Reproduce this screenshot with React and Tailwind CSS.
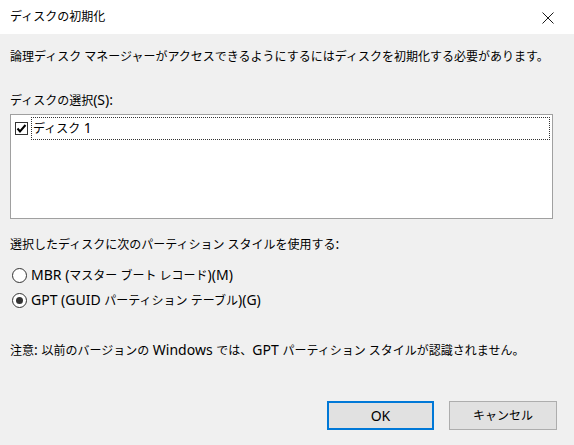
function L({ children }) {
  return <span className="text-[14px]">{children}</span>;
}

export default function App() {
  const font = { fontFamily: '"Noto Sans", "Noto Sans CJK JP", sans-serif' };
  return (
    <div
      className="w-[574px] h-[445px] bg-[#f0f0f0] text-[12px] text-black flex flex-col overflow-hidden"
      style={font}
    >
      <div className="h-[34px] bg-white flex items-center justify-between pl-[10px] pr-[20px] shrink-0">
        <span className="leading-[20px]">ディスクの初期化</span>
        <svg width="12" height="12" viewBox="0 0 12 12" className="mt-[2px]">
          <path d="M0.5 0.5 L11.5 11.5 M11.5 0.5 L0.5 11.5" stroke="#1a1a1a" strokeWidth="1" fill="none" />
        </svg>
      </div>
      <div className="flex flex-col pl-[10px] pr-[21px]">
        <div className="mt-[13px] h-[20px] leading-[20px] whitespace-nowrap">
          論理ディスク マネージャーがアクセスできるようにするにはディスクを初期化する必要があります。
        </div>
        <div className="mt-[23px] h-[20px] leading-[20px]">ディスクの選択<L>(S):</L></div>
        <div className="mt-[4px] h-[105px] bg-white border border-[#a0a0a0] p-[2px]">
          <div className="flex items-center h-[23px]">
            <div className="w-[13px] h-[13px] border border-[#333333] bg-white ml-[2px] mr-[3px] flex items-center justify-center shrink-0">
              <svg width="11" height="11" viewBox="0 0 11 11">
                <path d="M1.5 5.5 L4 8.5 L9.5 2" stroke="#000" strokeWidth="2" fill="none" />
              </svg>
            </div>
            <div className="flex-1 h-[23px] border border-dotted border-[#333333] flex items-center pl-[1px] leading-[20px]">
              <span>ディスク<L> 1</L></span>
            </div>
          </div>
        </div>
        <div className="mt-[15px] h-[20px] leading-[20px] whitespace-nowrap">
          選択したディスクに次のパーティション スタイルを使用する<L>:</L>
        </div>
        <div className="mt-[11px] h-[20px] flex items-center pl-[2px]">
          <div className="w-[15px] h-[15px] rounded-full border border-[#333333] bg-white mr-[4px] shrink-0" />
          <span className="leading-[20px] whitespace-nowrap"><L>MBR (</L>マスター ブート レコード<L>)(M)</L></span>
        </div>
        <div className="mt-[5px] h-[20px] flex items-center pl-[2px]">
          <div className="w-[15px] h-[15px] rounded-full border border-[#333333] bg-white mr-[4px] shrink-0 flex items-center justify-center">
            <div className="w-[7px] h-[7px] rounded-full bg-[#333333]" />
          </div>
          <span className="leading-[20px] whitespace-nowrap"><L>GPT (GUID </L>パーティション テーブル<L>)(G)</L></span>
        </div>
        <div className="mt-[30px] h-[20px] leading-[20px] whitespace-nowrap">
          注意<L>: </L>以前のバージョンの<L> Windows </L>では、<L>GPT </L>パーティション スタイルが認識されません。
        </div>
        <div className="mt-[41px] flex justify-end gap-[15px] pr-0 mr-[-4px]">
          <button className="w-[107px] h-[29px] bg-[#e1e1e1] border-2 border-[#0078d7] flex items-center justify-center leading-[20px]">
            <L>OK</L>
          </button>
          <button className="w-[108px] h-[29px] bg-[#e1e1e1] border border-[#adadad] flex items-center justify-center leading-[20px]">
            キャンセル
          </button>
        </div>
      </div>
    </div>
  );
}
